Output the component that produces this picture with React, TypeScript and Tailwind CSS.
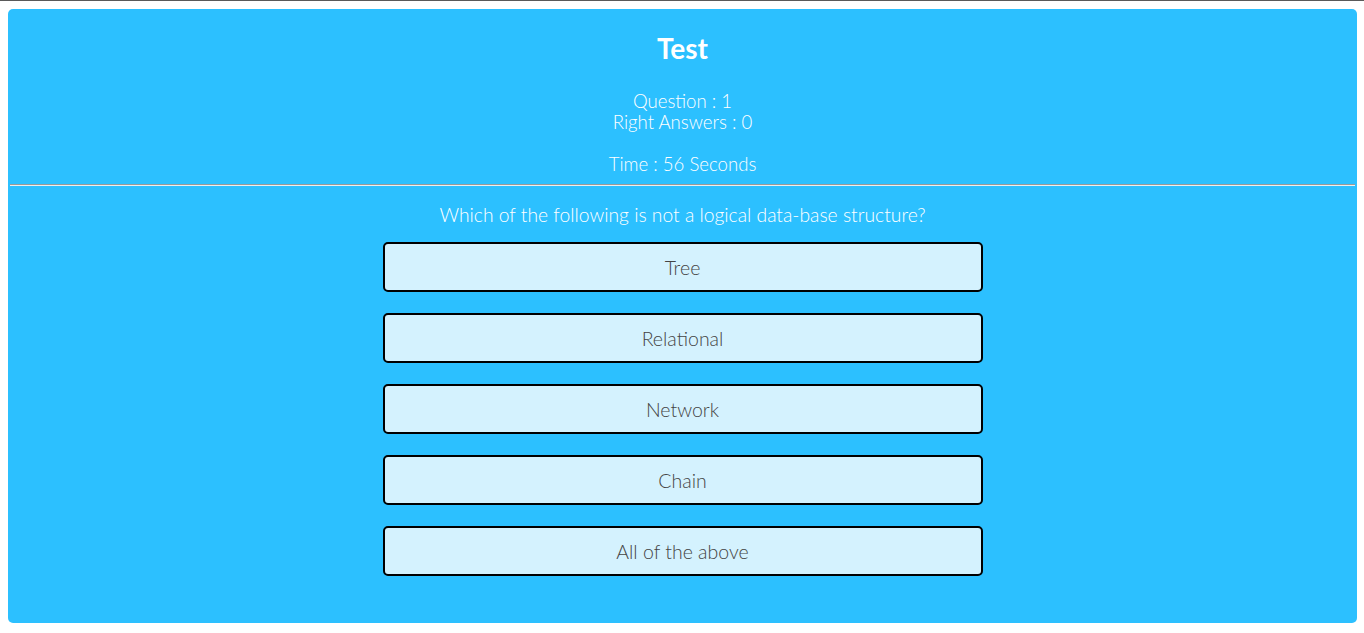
import React from "react";

const options = ["Tree", "Relational", "Network", "Chain", "All of the above"];

export default function App() {
  return (
    <div
      className="min-h-[633px] bg-white border-t border-[#5a5a5a] pt-2 pl-2 pr-[7px]"
      style={{ fontFamily: '"Lato", "Open Sans", sans-serif' }}
    >
      <div className="bg-[#2cc0ff] rounded-[5px] pt-[21px] pb-[47px] text-white">
        <h1 className="text-center text-[28px] leading-[36px] font-bold">Test</h1>
        <div className="mt-[25px] text-center text-[18.6px] leading-[21px] font-light">
          <div>Question : 1</div>
          <div>Right Answers : 0</div>
          <div className="h-[21px]" />
          <div>Time : 56 Seconds</div>
        </div>
        <div className="mt-[9px] mx-[2px] border-t border-t-[#9a9a9a] border-b border-b-[#eeeeee]" />
        <p className="mt-[17px] text-center text-[19.3px] leading-6 font-light">
          Which of the following is not a logical data-base structure?
        </p>
        <div className="mt-[15px] flex flex-col items-center gap-[21px]">
          {options.map((o) => (
            <button
              key={o}
              className="w-[600px] h-[50px] pt-[1px] bg-[#d4f2fe] border-2 border-black rounded-[5px] text-[19.5px] text-[#444444] font-light"
            >
              {o}
            </button>
          ))}
        </div>
      </div>
    </div>
  );
}
